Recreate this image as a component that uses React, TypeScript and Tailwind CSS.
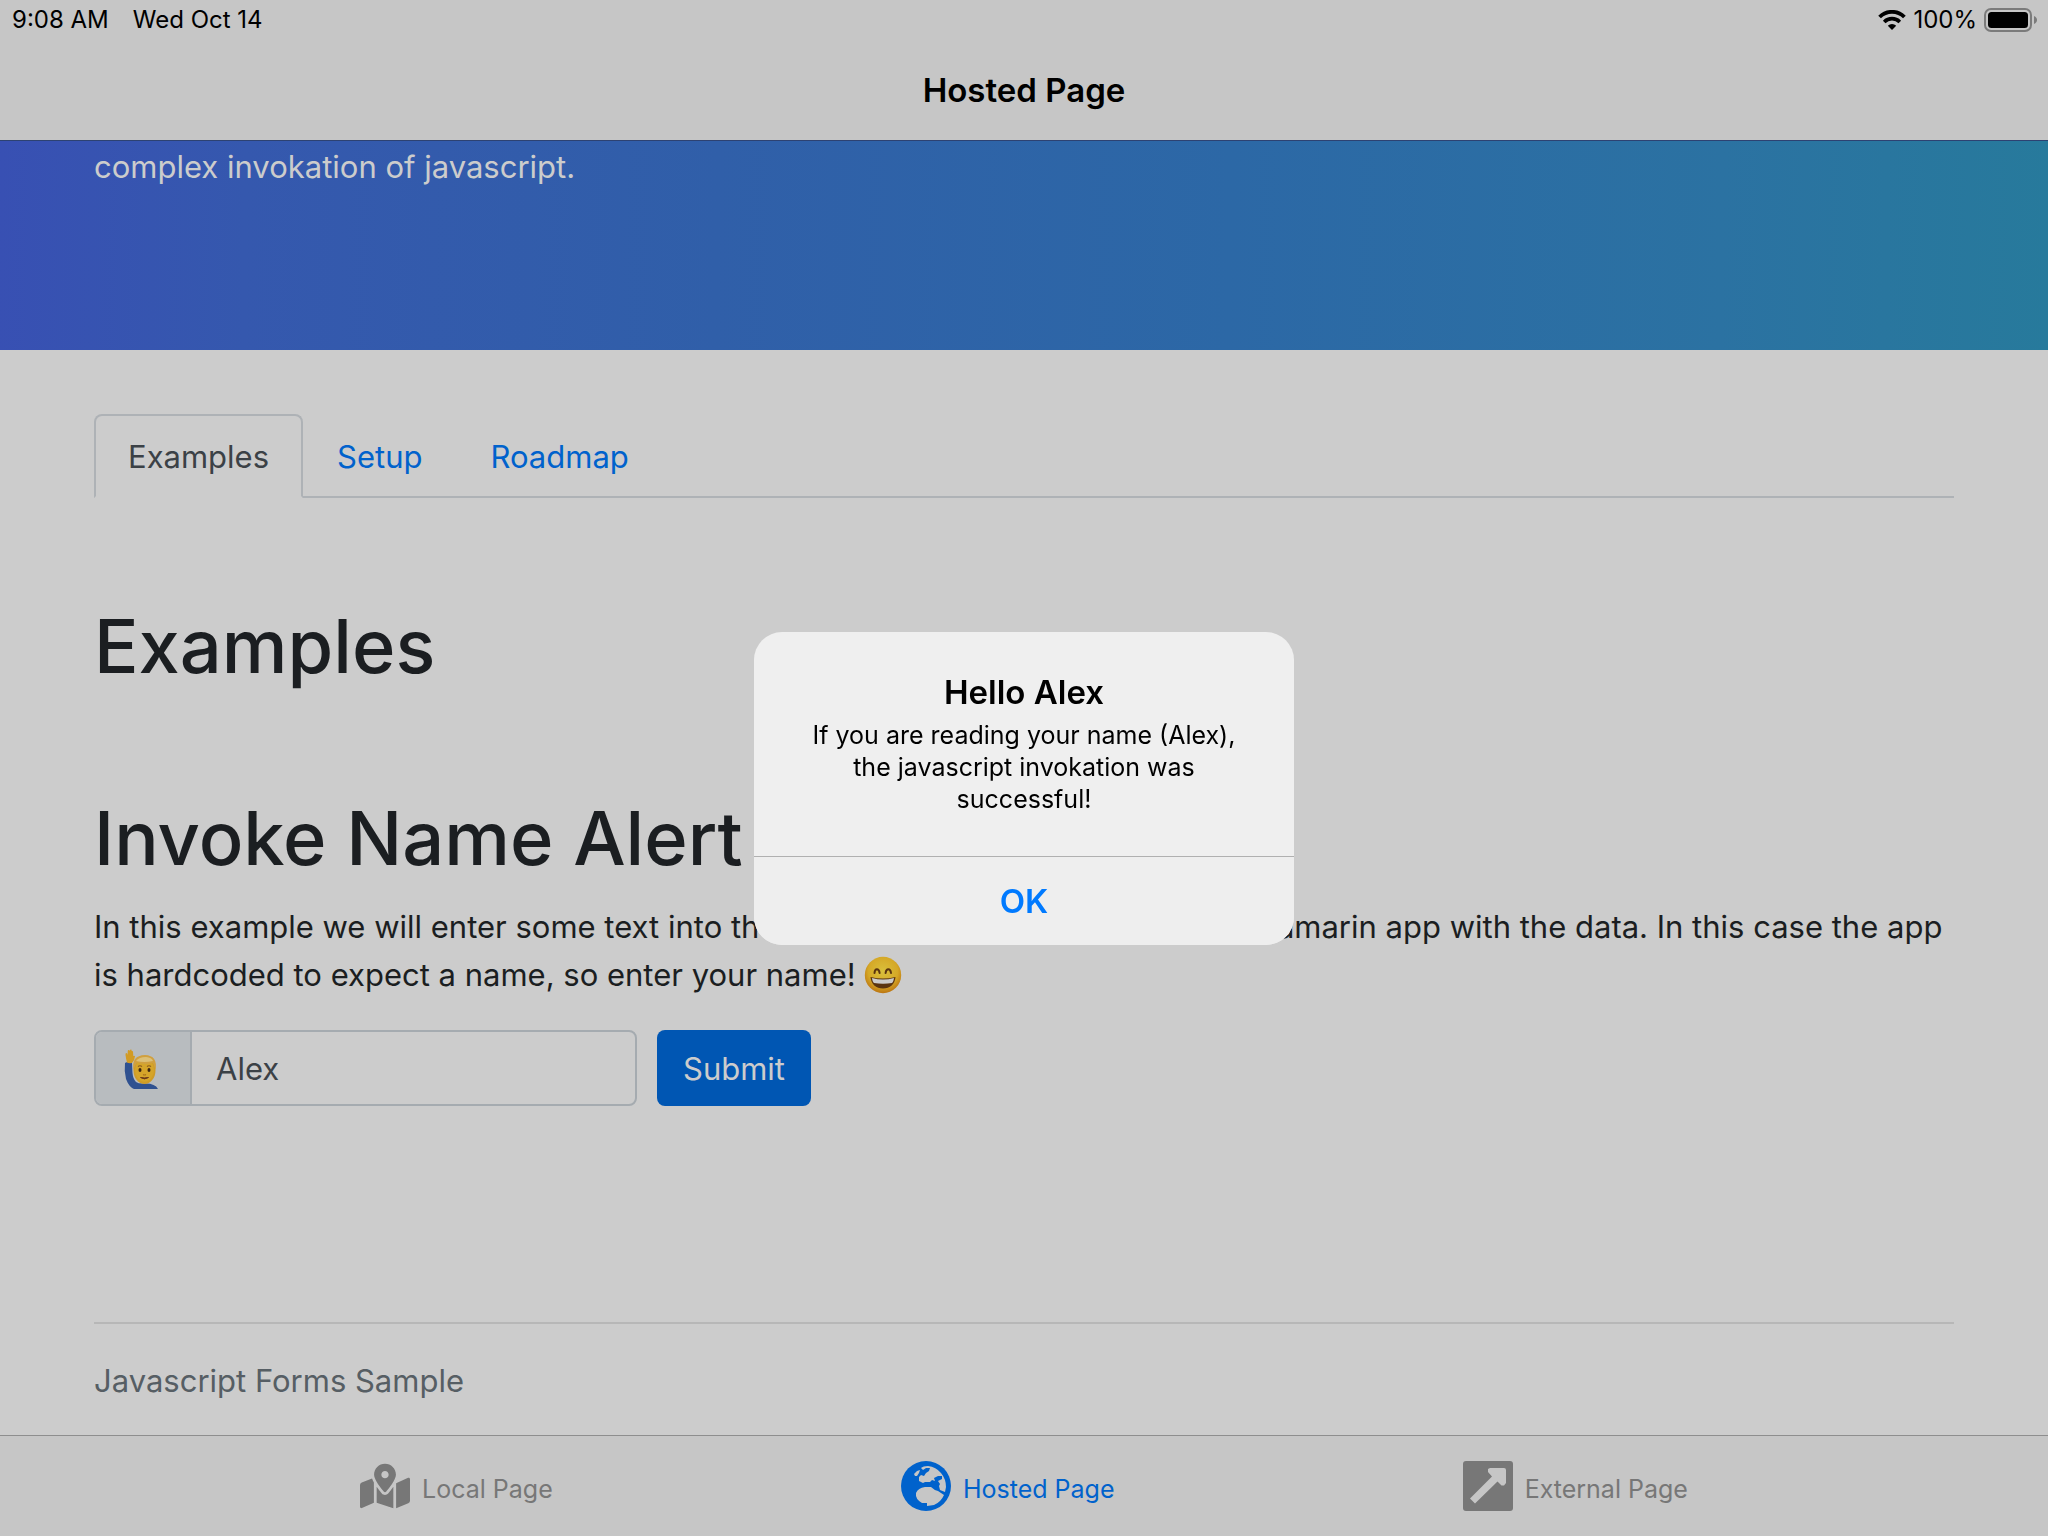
import { FaMapMarkedAlt } from "react-icons/fa";

const tabs = [
  { label: "Examples", active: true },
  { label: "Setup", active: false },
  { label: "Roadmap", active: false },
];

function WifiIcon() {
  return (
    <svg viewBox="0 0 28 20" className="h-5 w-7" aria-hidden="true">
      <path d="M1.6 7 A17.4 17.4 0 0 1 26.4 7" fill="none" stroke="#000" strokeWidth="3.8" />
      <path d="M6.2 11.9 A11 11 0 0 1 21.800 11.9" fill="none" stroke="#000" strokeWidth="3.6" />
      <path d="M14 20 L9.8 15.7 A6 6 0 0 1 18.2 15.7 Z" fill="#000" />
    </svg>
  );
}

function BatteryIcon() {
  return (
    <svg viewBox="0 0 54 24" className="h-6 w-[54px]" aria-hidden="true">
      <rect x="1" y="1" width="46" height="22" rx="6" fill="none" stroke="#7b7b7b" strokeWidth="2" />
      <rect x="4" y="4" width="40" height="16" rx="3.5" fill="#000" />
      <path d="M50 8 C54 9.5 54 14.5 50 16 Z" fill="#7b7b7b" />
    </svg>
  );
}

function GrinEmoji() {
  return (
    <svg viewBox="0 0 38 38" className="ml-2 inline-block h-[38px] w-[38px] align-[-8px]" role="img" aria-label="Grinning face with smiling eyes">
      <defs>
        <radialGradient id="face" cx="0.5" cy="0.4" r="0.62">
          <stop offset="0" stopColor="#d9c03c" />
          <stop offset="0.65" stopColor="#d5a827" />
          <stop offset="1" stopColor="#b9700f" />
        </radialGradient>
      </defs>
      <circle cx="19" cy="19" r="18.2" fill="url(#face)" />
      <path d="M10.5 17 C10.8 12 15 12 15.6 17 M21.6 17 C22.2 12 26.4 12 27 17" fill="none" stroke="#5a3410" strokeWidth="2" strokeLinecap="round" />
      <path d="M6.5 21 Q19 24 31.5 21 C31 28 26 32.5 19 32.5 C12 32.5 7 28 6.5 21 Z" fill="#5a3410" />
      <path d="M8 22 Q19 25 30 22 C29.6 24.5 29 26.3 28 27 Q19 28.4 10 27 C9 26.3 8.3 24.5 8 22 Z" fill="#cbcbcb" />
    </svg>
  );
}

function RaisedHandEmoji() {
  return (
    <svg viewBox="0 0 34 40" className="h-10 w-[34px]" role="img" aria-label="Man raising hand">
      <path d="M1 14 Q4 12 8 14 L8.500 24 Q9 30 12 33 Q15 35 20 34.500 Q31 34 34 40 H10 Q5 38 2 30 Q0 22 1 14 Z" fill="#2f5190" />
      <path d="M3 13.500 Q2 10 1.500 6 Q1.300 4 2.300 4 Q3.300 4 3.600 6 L3.800 1.800 Q4 .8 4.800 .9 Q5.500 1 5.600 2 L6 1 Q6.500 .2 7.200 .6 Q7.700 1 7.700 2 Q8.600 1.600 9 2.500 L9.300 7 Q10.500 6.500 11 7.300 Q10.500 12 8 14 Q5 14.500 3 13.500 Z" fill="#d29b24" />
      <ellipse cx="20.500" cy="21.500" rx="11" ry="13.500" fill="#cf9c28" />
      <ellipse cx="20.500" cy="21" rx="9.500" ry="11.500" fill="#d5a52a" />
      <path d="M9.500 21 Q7 6.500 21 6 Q34 6.500 31.500 21 Q30.500 17 29 14 Q20 16 13 13.500 Q11 16 9.500 21 Z" fill="#d0a040" />
      <path d="M12 12 Q15 8 22 8 Q28 8.500 29 12 Q20 14 12 12 Z" fill="#dcc078" />
      <path d="M14 17.500 Q16 16 18 17.500 M23 17.500 Q25 16 27 17.500" fill="none" stroke="#8a5a1c" strokeWidth="1.2" />
      <ellipse cx="16" cy="21" rx="1.5" ry="1.9" fill="#3a2412" />
      <ellipse cx="25" cy="21" rx="1.5" ry="1.9" fill="#3a2412" />
      <path d="M19 25.500 Q20.500 26.500 22 25.500" fill="none" stroke="#a8701a" strokeWidth="1.2" />
      <path d="M16.500 28.500 Q20.500 31.300 24.500 28.500 Q20.500 29.300 16.500 28.500 Z" fill="#6b3a1a" stroke="#6b3a1a" />
    </svg>
  );
}

function GlobeIcon() {
  return (
    <svg viewBox="0 0 50 50" className="h-[50px] w-[50px]" aria-hidden="true">
      <circle cx="25" cy="25" r="25" fill="#0062cc" />
      <path d="M20 7 Q22 5 27 5 Q35 6 40 12 Q45 18 45 26 L44 31 L39 29 L38 25 L39 23 L37 20 L41 18 V15 H37 L33 17 L34 20 L31 19 L29 21 H24 L22 22 L18 20 V16 L20 14 L23 15 L25 12 L28 10 L29 7 L25 7 L22 9 Z" fill="#c6c6c6" />
      <path d="M13 13 L16 10 L19 9 L18 12 L16 15 H14 Z" fill="#c6c6c6" />
      <path d="M15 32 Q17 27 24 26 H30 Q33 29 37 30 L43 34 Q40 41 33 44 L26 45 V42 H21 Q14 38 15 32 Z" fill="#c6c6c6" />
    </svg>
  );
}

function ExternalIcon() {
  return (
    <svg viewBox="0 0 50 50" className="h-[50px] w-[50px]" aria-hidden="true">
      <rect width="50" height="50" rx="3" fill="#777" />
      <path d="M7 37.500 L29 15.500 L25 11 V8 L27 7 H41 Q43 7 43 9 V22 L41 24.500 H38.500 L34.500 20.500 L12 42.500 Z" fill="#c6c6c6" />
    </svg>
  );
}

function Alert() {
  return (
    <div className="fixed inset-0 flex items-center justify-center pt-[41px]">
      <div role="alertdialog" aria-labelledby="alert-title" aria-describedby="alert-text" className="w-[540px] overflow-hidden rounded-[28px] bg-[#efefef] text-center text-black">
        <div className="px-12 pt-10 pb-[41px]">
          <h2 id="alert-title" className="text-[33px] leading-10 font-semibold">Hello Alex</h2>
          <p id="alert-text" className="mt-[7px] text-[25px] leading-8">
            If you are reading your name (Alex), the javascript invokation was successful!
          </p>
        </div>
        <button type="button" className="block h-[89px] w-full border-t border-[#b0b0b0] bg-[#eeeeee] text-[33px] font-semibold text-[#007aff]">OK</button>
      </div>
    </div>
  );
}

export default function App() {
  return (
    <div className="flex min-h-screen flex-col bg-[#ccc] font-[Inter,sans-serif] text-[31px] leading-[48px] text-[#1b1e21]">
      <header className="border-b border-[#2d4272] bg-[#c6c6c6] text-black">
        <div className="flex h-10 items-center justify-between pr-2.5 pl-3 text-[24px]">
          <div className="flex gap-6">
            <span>9:08 AM</span>
            <span>Wed Oct 14</span>
          </div>
          <div className="flex items-center gap-[7px]">
            <WifiIcon />
            <span>100%</span>
            <BatteryIcon />
          </div>
        </div>
        <h1 className="flex h-[100px] items-center justify-center text-[33px] font-semibold">Hosted Page</h1>
      </header>

      <section className="h-[209px] bg-[linear-gradient(91deg,#3850b3_0%,#3558ae_12%,#305fa9_35%,#2c68a6_60%,#2b72a2_84%,#277a9c_100%)] px-[94px] pt-0.5 text-[#ccc]">
        <p>complex invokation of javascript.</p>
      </section>

      <main className="flex-1 px-[94px] pt-16">
        <nav className="flex border-b-2 border-[#aeb2b6]">
          {tabs.map((tab) => (
            <a
              key={tab.label}
              href="#"
              className={
                tab.active
                  ? "-mb-0.5 rounded-t-lg border-2 border-[#aeb2b6] border-b-[#ccc] px-8 pt-[17px] pb-[15px] text-[#3b4146]"
                  : "-mb-0.5 border-2 border-transparent px-8 pt-[17px] pb-[15px] text-[#0062cc]"
              }
            >
              {tab.label}
            </a>
          ))}
        </nav>

        <h2 className="mt-[100px] text-[74px] leading-24 font-medium">Examples</h2>
        <h2 className="mt-24 text-[74px] leading-24 font-medium">Invoke Name Alert</h2>
        <p className="mt-[17px]">
          In this example we will enter some text into the form above and then invoke the Xamarin app with the data. In this case the app is hardcoded to expect a name, so enter your name!
          <GrinEmoji />
        </p>
        <form className="mt-[31px] flex gap-5" onSubmit={(e) => e.preventDefault()}>
          <div className="flex h-[76px] w-[543px] overflow-hidden rounded-lg border-2 border-[#a5abb0]">
            <label htmlFor="name" className="flex w-24 shrink-0 items-center justify-center border-r-2 border-[#a5abb0] bg-[#b8bcbf] pt-0.5 pr-1">
              <RaisedHandEmoji />
            </label>
            <input id="name" type="text" defaultValue="Alex" className="min-w-0 flex-1 bg-transparent px-6 pt-0.5 text-[#3b4146] outline-none" />
          </div>
          <button type="submit" className="h-[76px] rounded-lg bg-[#0056b3] px-[26px] pt-0.5 text-[#ccc]">Submit</button>
        </form>
      </main>

      <footer className="mx-[94px] border-t-2 border-[#b7b7b7] pt-[33px] pb-[30px] text-[#565e64]">Javascript Forms Sample</footer>

      <nav className="flex h-[101px] justify-center gap-[17%] border-t border-[#8e8e8e] bg-[#c6c6c6] text-[25px] text-[#777]">
        <a href="#" className="flex items-center gap-3">
          <FaMapMarkedAlt size={50} />
          <span className="pt-1.5">Local Page</span>
        </a>
        <a href="#" className="flex items-center gap-3 text-[#0062cc]">
          <GlobeIcon />
          <span className="pt-1.5">Hosted Page</span>
        </a>
        <a href="#" className="flex items-center gap-3">
          <ExternalIcon />
          <span className="pt-1.5">External Page</span>
        </a>
      </nav>
      <Alert />
    </div>
  );
}
